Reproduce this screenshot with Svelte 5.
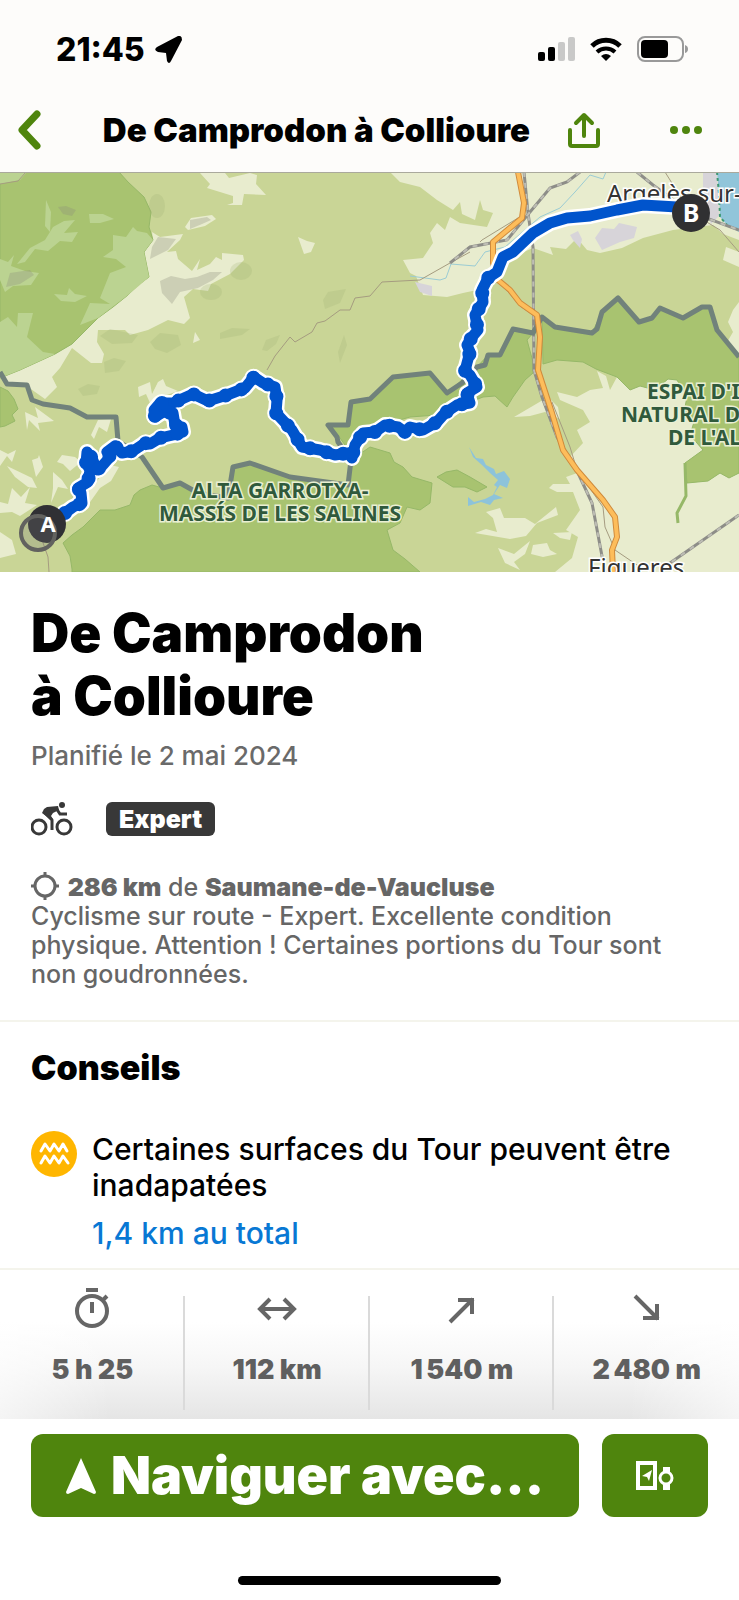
<script>
  const stats = [
    { icon: 'time', label: 'Durée', value: '5 h 25' },
    { icon: 'distance', label: 'Distance', value: '112 km' },
    { icon: 'up', label: 'Dénivelé positif', value: '1\u202f540 m' },
    { icon: 'down', label: 'Dénivelé négatif', value: '2\u202f480 m' },
  ]

  // mountain part of the route, drawn with extra bends
  const climb = '65,341 73,335 82,331 81,321 78,316 88,310 90,298 86,291 87,280 92,286 97,298 103,293 110,285 107,280 115,274 122,281 133,279 145,271 150,272 160,266 173,263 183,260 182,255 175,253 173,241 163,240 155,245 154,238 160,231 173,231 193,222 208,229 227,223 245,216 254,205 263,211 275,215 277,228 276,241 292,258 302,275 320,278 335,283 348,281 352,286 355,273 363,261 375,260 385,253 398,255 405,260 410,255 423,258 437,250 445,241 457,233 470,231 467,221 477,215 470,203 465,199 467,191 470,180 467,173 472,165 478,158 475,143 483,130 482,118 488,106 497,100'
  const valley = '497,100 503,85 513,80 533,61 550,51 567,46 590,44 617,38 643,33 677,35'
  const route = climb + ' ' + valley

  const parks = [
    '0,0 119,0 128,10 144,25 151,40 149,55 153,68 144,80 149,105 138,113 128,123 113,135 98,146 72,172 55,182 20,198 0,206',
    '0,215 8,219 14,227 18,237 12,243 15,249 5,254 0,255',
    '542,147 555,155 592,161 602,140 618,126 639,150 652,146 660,136 683,146 702,135 710,135 717,158 739,185 739,301 729,306 720,301 708,309 687,311 685,291 703,278 690,263 694,250 684,240 687,225 677,208 668,207 655,218 640,214 630,218 617,205 596,197 583,190 557,188 543,192',
    '340,266 330,253 348,253 351,230 370,227 393,205 430,201 447,221 477,195 488,183 500,183 513,157 533,161 527,168 533,190 533,201 525,208 513,225 507,235 495,224 483,225 437,243 410,245 375,255 350,280',
    '72,397 70,384 63,371 72,363 83,355 100,338 115,338 130,333 134,323 140,318 152,313 163,316 180,311 198,321 228,326 233,295 250,291 290,305 348,313 351,288 370,275 390,281 394,290 403,295 412,305 432,311 430,331 420,338 407,335 400,351 387,358 393,378 405,387 420,400 72,400',
    '437,305 446,300 457,298 470,305 487,315 477,320 465,315 453,315',
  ]

  const meadows = [
    '113,63 126,65 133,55 137,59 147,61 153,68 144,80 149,105 128,123 98,146 80,153 86,140 90,131 110,132 100,126 110,101 126,95 116,87 103,85 113,78',
    '0,150 8,145 17,155 18,141 33,141 27,165 43,180 55,182 20,198 0,206',
    '17,92 30,76 45,68 53,55 64,49 75,48 64,61 78,60 72,70 60,69 48,79 35,77 25,90',
    '46,28 51,40 50,60 45,54',
    '89,42 103,42 114,47 100,51 90,51',
    '0,87 8,90 14,83 11,94 25,99 39,101 31,113 13,114 5,120 0,108',
    '54,122 67,123 69,116 75,122 87,124 75,130 61,129',
    '0,0 27,0 20,8 0,12',
  ]

  const fields = [
    '152,60 160,65 183,62 180,68 167,80 176,79 178,87 192,99 200,87 197,98 210,92 216,85 222,88 222,81 243,83 244,88 230,102 211,112 208,119 193,117 184,125 190,146 184,152 168,148 148,158 130,163 125,158 98,158 97,170 104,182 102,191 91,191 72,176 60,196 52,205 57,215 45,227 28,215 8,212 0,204 20,198 55,182 72,172 98,146 128,123 149,105 144,80 153,68',
    '200,1 210,12 207,16 233,24 233,31 227,33 242,33 244,22 266,23 256,12 257,3 250,1 229,6 225,1',
    '298,65 307,69 315,71 311,80 304,82',
    '185,55 191,46 212,43 216,47 205,54 188,58',
    '195,160 200,168 193,171',
    '138,215 150,210 152,222 158,210 163,207 166,214 178,219 164,224 150,231 146,222 139,225',
    '25,240 38,246 35,235 54,249 38,251 40,259 29,248 27,258',
    '98,248 111,247 107,260 99,255 94,267 91,263',
    '0,278 8,282 16,278 12,290 7,284 0,294',
    '7,294 32,306 37,316 28,315 15,305',
    '32,288 38,286 39,283 43,295 36,305',
    '57,290 62,283 75,285 81,290 70,299 63,292',
    '53,300 62,308 68,317 58,315 51,331 53,316',
    '12,316 21,325 30,315 25,331 37,333 20,344 12,340 0,341 0,330 8,332',
    '110,293 119,295 111,309 100,316 88,333 77,335 84,325',
    '0,360 12,368 16,382 0,386',
    '390,0 400,10 420,15 437,28 453,38 460,30 462,42 475,48 480,28 483,38 493,41 487,55 460,51 450,45 445,58 437,51 430,61 433,71 423,86 403,88 410,101 416,104 423,123 447,125 463,121 477,118 500,90 533,76 553,83 550,75 566,77 577,66 587,78 600,81 622,76 643,66 673,58 713,53 723,62 739,68 739,0',
    '739,95 723,88 726,75 739,80',
    '739,130 733,138 728,150 733,160 726,172 739,185',
    '597,199 606,204 610,218 617,205 630,218 640,214 655,218 668,207 677,208 687,225 684,240 694,250 690,263 703,278 685,291 687,311 708,309 720,301 729,306 739,301 739,400 555,400 572,386 578,365 566,358 580,338 573,320 557,320 549,316 553,312 570,312 566,305 580,300 570,285 583,271 577,258 590,250 583,238 560,228 557,220 577,225 590,218 603,216',
    '514,245 531,235 548,225 558,235 560,247 545,240 530,244',
    '486,340 500,336 504,346 525,346 535,352 556,335 558,343 537,351 526,364 510,367 475,361 486,357 497,360 493,346',
    '498,376 514,382 530,369 525,382 514,390 520,398 505,391',
    '533,373 547,371 550,378 557,382 543,385 531,382',
    '553,361 572,360 570,368 560,366',
    '150,336 160,340 166,350 175,355 170,359 160,347 152,343',
  ]

  const hills = [
    '158,65 176,67 168,78 150,87 152,75',
    '160,109 171,104 185,107 197,105 210,100 222,100 213,108 198,116 180,120 172,132 162,121',
    '58,35 66,34 76,38 72,44 63,42',
    '190,48 207,45 211,48 202,52 190,57',
    '10,101 30,98 34,103 20,112 6,115',
  ]

  const border = '0,200 7,212 27,213 32,228 43,232 70,236 87,245 116,245 118,269 142,285 163,316 180,311 198,321 228,326 233,295 250,291 290,305 348,313 351,288 338,270 337,265 328,253 348,253 351,230 370,227 393,205 430,201 447,221 462,211 477,195 485,193 488,183 500,183 513,157 533,161 542,145 555,155 592,161 597,157 602,140 618,126 639,150 652,146 660,136 683,146 702,135 710,135 717,158 739,185'

  const highway = '518,0 524,31 522,46 493,70 493,91 498,108 510,118 520,131 537,143 540,165 538,198 552,241 563,278 577,298 603,328 615,345 617,365 612,378 613,400'

  const rails = [
    '524,0 528,41 533,75 534,198 542,225 557,265 578,301 592,331 605,400',
    '580,0 567,10 550,16 530,40 507,68 470,75 450,91',
    '637,0 653,13 690,40 739,58',
    '739,343 670,391',
  ]

  const roads = [
    '267,198 275,184 290,165 295,170 312,160 317,151 325,149 340,138 350,138 355,126 370,124 382,110 420,108 450,91 470,80',
    '665,0 690,40 720,58 739,80',
    '498,108 520,134 537,146',
    '552,230 570,275 577,298 603,335 605,355 615,378 640,395',
    '480,70 482,68 518,46',
    '0,12 18,9 26,0',
    '41,365 48,385 49,400',
  ]

  const streams = [
    '410,104 440,108 446,106 451,92 475,94 485,80 505,75 540,45 560,36 575,20 590,3 603,7 606,0',
  ]
</script>

<svelte:head>
  <title>De Camprodon à Collioure</title>
</svelte:head>

<div class="screen">
  <header>
    <div class="status">
      <div class="clock">
        <span>21:45</span>
        <svg width="27" height="27" viewBox="0 0 27 27" aria-hidden="true">
          <path d="M23 0 2 11q-4 3 1 5l8 1 1 8q2 4 4 0L27 4q0-5-4-4Z" />
        </svg>
      </div>
      <div class="signals">
        <svg width="37" height="24" viewBox="0 0 37 24" aria-hidden="true">
          <rect y="15" width="7" height="9" rx="2" />
          <rect x="10" y="10" width="7" height="14" rx="2" />
          <rect x="20" y="5" width="7" height="19" rx="2" fill="#c9c9c8" />
          <rect x="30" width="7" height="24" rx="2" fill="#c9c9c8" />
        </svg>
        <svg width="32" height="24" viewBox="0 0 32 24" fill="none" stroke="#000" stroke-width="5" aria-hidden="true">
          <path d="M2 9a20 20 0 0 1 28 0" />
          <path d="M7 15a13 13 0 0 1 18 0" stroke-width="4" />
          <path d="m11 19 5 5 5-5a8 8 0 0 0-10 0Z" fill="#000" stroke="none" />
        </svg>
        <svg width="52" height="26" viewBox="0 0 52 26" aria-hidden="true">
          <rect x="1" y="1" width="45" height="24" rx="7" fill="none" stroke="#999" stroke-width="2" />
          <rect x="4" y="4" width="27" height="18" rx="4" />
          <path d="M48 9q3 1 3 4t-3 4Z" fill="#999" />
        </svg>
      </div>
    </div>

    <nav>
      <button class="icon-button" aria-label="Retour">
        <svg width="24" height="40" viewBox="0 0 24 40" fill="none" stroke="#4f850d" stroke-width="7" stroke-linecap="round" stroke-linejoin="round">
          <path d="M20 4 5 20l15 16" />
        </svg>
      </button>
      <span class="nav-title">De Camprodon à Collioure</span>
      <button class="icon-button" aria-label="Partager">
        <svg width="32" height="36" viewBox="0 0 32 36" fill="none" stroke="#4f850d" stroke-width="4" stroke-linecap="round" stroke-linejoin="round">
          <path d="M2 18v14q0 2 2 2h24q2 0 2-2V18M16 24V4M8 11l8-8 8 8" />
        </svg>
      </button>
      <button class="icon-button more" aria-label="Plus d'options">
        <svg width="32" height="8" viewBox="0 0 32 8" fill="#4f850d">
          <circle cx="4" cy="4" r="4" />
          <circle cx="16" cy="4" r="4" />
          <circle cx="28" cy="4" r="4" />
        </svg>
      </button>
    </nav>
  </header>

  <svg class="map" viewBox="0 0 739 400" role="img" aria-label="Carte du parcours">
    <rect width="739" height="400" fill="#c9d596" />
    {#each fields as points}
      <polygon {points} fill="#e8ecce" />
    {/each}
    {#each parks as points}
      <polygon {points} fill="#a8c370" stroke="#96b868" />
    {/each}
    {#each meadows as points}
      <polygon {points} fill="#bbd391" />
    {/each}
    {#each hills as points}
      <polygon {points} fill="#8b8b7c" opacity=".3" />
    {/each}

    <g fill="#9caf70" opacity=".22">
      <ellipse cx="157" cy="34" rx="8" ry="12" />
      <ellipse cx="241" cy="99" rx="11" ry="9" />
      <ellipse cx="211" cy="120" rx="11" ry="8" />
      <path d="M100 164l10-7 28 6-6 8-20 1zM323 128l5-8 18-3-6 14-15 6zM220 161l12-5 18 1-8 6-22 4zM262 178l4-10 14-5-4 9-9 7zM150 170l10-9 18 2 3 10-14 8-12-4zM78 217l10-5 12 2-3 8-14 2zM104 190l10-4 12 3-7 10-14 2zM338 180l6-17 3 10-7 18z" />
    </g>

    <path d="M570 63l8-4 4 8-2 9-7-8zM595 66l7-10 12 1 5-6 18 4-3 11-14 4-18 8zM415 110l17 4v10l-12-4zM703 0h14l2 44-8 8-8-22z" fill="#d7d4d9" />
    <path d="M717 0 719 22 720 45 727 53 739 60V0Z" fill="#91c5da" />
    <path d="M717 0 719 22 720 45 727 53" fill="none" stroke="#3d9873" stroke-width="2" stroke-dasharray="3 3" />
    <path d="m469 275 7 11 7 1 3 6 8 4 2 5 8-3 6 8-3 9-7-3-6 9 9 4-9 2-4 5-9-3-13 4v-9l6 5 11-3 8-4 4-8-3-2 4-5-8-7-8-8-9-8Z" fill="#8dc3da" />
    <path d="m685 291 1 33-9 17 1 10" fill="none" stroke="#96b868" stroke-width="3" />

    {#each streams as points}
      <polyline {points} fill="none" stroke="#9bccd4" />
    {/each}
    {#each roads as points}
      <polyline {points} fill="none" stroke="#a59c80" />
    {/each}
    {#each rails as points}
      <polyline {points} fill="none" stroke="#8d8d88" stroke-width="3" />
      <polyline {points} fill="none" stroke="#bdbdb4" stroke-width="2" stroke-dasharray="5 6" />
    {/each}
    <polyline points={border} fill="none" stroke="#71827b" stroke-width="5" stroke-linejoin="round" />
    <polyline points={highway} fill="none" stroke="#cf8a3c" stroke-width="6" stroke-linejoin="round" />
    <polyline points={highway} fill="none" stroke="#fdbd5b" stroke-width="4" stroke-linejoin="round" />

    <text class="town" x="607" y="30">Argelès sur-</text>
    <text class="town" x="588" y="404">Figueres</text>
    <g class="park-name">
      <text x="280" y="326" text-anchor="middle">ALTA GARROTXA-</text>
      <text x="280" y="349" text-anchor="middle">MASSÍS DE LES SALINES</text>
      <text x="647" y="227">ESPAI D'I</text>
      <text x="621" y="250">NATURAL D</text>
      <text x="668" y="273">DE L'AL</text>
    </g>

    <g fill="none" stroke-linejoin="round" stroke-linecap="round">
      <polyline points={route} stroke="#fff" stroke-width="16" />
      <polyline points={climb} stroke="#fff" stroke-width="18" stroke-dasharray="0 17" />
      <polyline points={route} stroke="#0054cc" stroke-width="11" />
      <polyline points={climb} stroke="#0054cc" stroke-width="14" stroke-dasharray="0 17" />
    </g>

    <circle cx="47" cy="352" r="19" fill="#303034" />
    <circle cx="38" cy="361" r="17" fill="#777" fill-opacity=".25" stroke="#62625f" stroke-width="4" />
    <text class="pin" x="48" y="360" text-anchor="middle">A</text>
    <circle cx="691" cy="41" r="19" fill="#303032" />
    <text class="pin big" x="691" y="50" text-anchor="middle">B</text>
    <path d="M0 .5H739" stroke="#aaa99c" />
  </svg>

  <main>
    <section class="summary">
      <h1>De Camprodon<br />à Collioure</h1>
      <p class="date">Planifié le 2 mai 2024</p>

      <div class="sport">
        <svg width="42" height="34" viewBox="0 0 42 34" fill="none" stroke="#383838" stroke-width="3" role="img" aria-label="Cyclisme">
          <circle cx="8" cy="25" r="7" />
          <circle cx="33" cy="25" r="7" />
          <circle cx="31" cy="3" r="3" fill="#383838" stroke="none" />
          <path d="M21 28V18l-7-7M25 6l4 6h7" />
          <path d="m11 11 2-4 3-2 11-1 1 4-6 3-2 3 2 3v4l-3-4Z" fill="#383838" stroke="none" />
        </svg>
        <span class="badge">Expert</span>
      </div>

      <p class="details">
        <svg width="30" height="28" viewBox="0 0 30 28" fill="none" stroke="#666" stroke-width="3" aria-hidden="true">
          <circle cx="14" cy="14" r="10" />
          <path d="M14 0v5M14 23v5M0 14h5M23 14h5" />
        </svg>
        <b>286 km</b> de <b>Saumane-de-Vaucluse</b><br />
        Cyclisme sur route - Expert. Excellente condition physique. Attention ! Certaines portions du Tour sont non goudronnées.
      </p>
    </section>

    <section class="tips">
      <h2>Conseils</h2>
      <div class="tip">
        <svg width="46" height="46" viewBox="0 0 46 46" fill="none" stroke="#fff" stroke-width="3" stroke-linejoin="round" stroke-linecap="round" aria-hidden="true">
          <circle cx="23" cy="23" r="23" fill="#ffb600" stroke="none" />
          <path d="m10 20 4-7 5 7 4-7 5 7 4-7 4 7M10 32l4-7 5 7 4-7 5 7 4-7 5 7" />
        </svg>
        <div>
          <p>Certaines surfaces du Tour peuvent être inadapatées</p>
          <a href="#surfaces">1,4 km au total</a>
        </div>
      </div>
    </section>

    <ul class="stats">
      {#each stats as stat}
        <li>
          <svg width="40" height="40" viewBox="0 0 40 40" fill="none" stroke="#666" stroke-width="4" role="img" aria-label={stat.label}>
            {#if stat.icon === 'time'}
              <circle cx="20" cy="23" r="15" />
              <path d="M14 2h12M20 14v11M31 12l4-4" />
            {:else if stat.icon === 'distance'}
              <path d="M3 21h34M13 11 3 21l10 10M27 11l10 10-10 10" />
            {:else if stat.icon === 'up'}
              <path d="m8 34 23-23M16 12h14v14" />
            {:else}
              <path d="m8 8 23 23M30 16v14H16" />
            {/if}
          </svg>
          <strong>{stat.value}</strong>
        </li>
      {/each}
    </ul>
  </main>

  <footer>
    <div class="actions">
      <button class="primary">
        <svg width="30" height="36" viewBox="0 0 30 36" fill="#fff" aria-hidden="true">
          <path d="M15 0 30 34q0 2-2 2l-13-6-13 6q-2 0-2-2Z" />
        </svg>
        <span>Naviguer avec...</span>
      </button>
      <button class="devices" aria-label="Envoyer vers un appareil">
        <svg width="38" height="30" viewBox="0 0 38 30" aria-hidden="true">
          <rect x="2" y="2" width="17" height="25" fill="none" stroke="#fff" stroke-width="4" />
          <path d="m16 9-3 11-2-4-5-1Z" fill="#fff" />
          <path d="M27 6h7v5h-7ZM27 23h7v6h-7Z" fill="#fff" />
          <circle cx="30" cy="17" r="6" fill="none" stroke="#fff" stroke-width="3" />
        </svg>
      </button>
    </div>
    <div class="home-bar"></div>
  </footer>
</div>

<style>
  :global(body) {
    background: #fff;
  }

  .screen {
    font-family: Inter, sans-serif;
    color: #000;
    background: #fff;
  }

  h1, h2, p, ul {
    margin: 0;
    padding: 0;
  }

  svg {
    display: block;
    flex: none;
  }

  button {
    border: 0;
    padding: 0;
    background: none;
    font: inherit;
    cursor: pointer;
  }

  header {
    background: #fdfcfa;
  }

  .status {
    display: flex;
    justify-content: space-between;
    align-items: center;
    padding: 30px 50px 0 56px;
    height: 38px;
  }

  .clock {
    display: flex;
    align-items: center;
    gap: 10px;
    font-size: 32px;
    font-weight: 800;
  }

  .signals {
    display: flex;
    align-items: center;
    gap: 15px;
  }

  nav {
    display: flex;
    align-items: center;
    height: 80px;
    padding: 22px 37px 2px 17px;
  }

  .nav-title {
    flex: 1;
    padding-left: 24px;
    text-align: center;
    font-size: 33px;
    font-weight: 900;
    white-space: nowrap;
  }

  .more {
    margin-left: 70px;
  }

  .map {
    width: 100%;
    height: auto;
  }

  .town {
    font: 24px "Noto Sans", sans-serif;
    fill: #333;
    stroke: #fff;
    stroke-width: 3px;
    paint-order: stroke;
  }

  .park-name {
    font: 700 21px "Noto Sans", sans-serif;
    fill: #305a3c;
    stroke: #e9efd3;
    stroke-width: 3px;
    paint-order: stroke;
  }

  .pin {
    font: 700 22px "Noto Sans", sans-serif;
    fill: #fff;
  }

  .pin.big {
    font-size: 25px;
  }

  .summary {
    padding: 30px 31px 31px;
    border-bottom: 2px solid #f4f4ec;
  }

  h1 {
    font-size: 53px;
    line-height: 63px;
    font-weight: 900;
  }

  .date {
    margin-top: 10px;
    font-size: 26px;
    line-height: 36px;
    font-weight: 500;
    color: #6a6a6a;
  }

  .sport {
    display: flex;
    align-items: center;
    gap: 33px;
    margin-top: 28px;
  }

  .badge {
    padding: 0 13px;
    border-radius: 6px;
    background: #383838;
    color: #fff;
    font-size: 25px;
    line-height: 34px;
    font-weight: 900;
  }

  .details {
    margin-top: 36px;
    font-size: 25px;
    line-height: 29px;
    font-weight: 500;
    color: #666;
  }

  .details svg {
    display: inline-block;
    vertical-align: -4px;
  }

  .details b {
    font-weight: 900;
  }

  .tips {
    padding: 25px 31px 17px;
    border-bottom: 2px solid #f4f4ec;
  }

  h2 {
    font-size: 34px;
    line-height: 42px;
    font-weight: 900;
  }

  .tip {
    display: flex;
    gap: 15px;
    margin-top: 42px;
    font-size: 30px;
    line-height: 36px;
    font-weight: 500;
  }

  .tip a {
    display: block;
    margin-top: 12px;
    color: #0878d4;
    text-decoration: none;
  }

  .stats {
    display: grid;
    grid-template-columns: repeat(4, 1fr);
    list-style: none;
    padding: 18px 0 9px;
    background:
      linear-gradient(90deg, rgba(255, 255, 255, .6), transparent 15%, transparent 85%, rgba(255, 255, 255, .6)),
      linear-gradient(#fff 35%, #f6f6f6 65%, #e5e5e5);
  }

  .stats li {
    position: relative;
    display: flex;
    flex-direction: column;
    align-items: center;
    gap: 26px;
    height: 122px;
    color: #5f5f5f;
    font-size: 27px;
    line-height: 32px;
  }

  .stats li:not(:last-child)::after {
    content: "";
    position: absolute;
    top: 8px;
    right: 0;
    bottom: 0;
    width: 2px;
    background: #dadada;
  }

  .stats strong {
    font-weight: 900;
  }

  footer {
    padding: 15px 31px 16px;
  }

  .actions {
    display: flex;
    gap: 23px;
  }

  .primary {
    flex: 1;
    min-width: 0;
    display: flex;
    justify-content: center;
    align-items: center;
    gap: 15px;
    height: 83px;
    border-radius: 12px;
    background: #4f850d;
    color: #fff;
    font-size: 52px;
    font-weight: 900;
    white-space: nowrap;
  }

  .devices {
    display: grid;
    place-items: center;
    width: 106px;
    height: 83px;
    border-radius: 12px;
    background: #4f850d;
  }

  .home-bar {
    width: 263px;
    height: 9px;
    margin: 59px auto 0;
    border-radius: 5px;
    background: #000;
  }
</style>
